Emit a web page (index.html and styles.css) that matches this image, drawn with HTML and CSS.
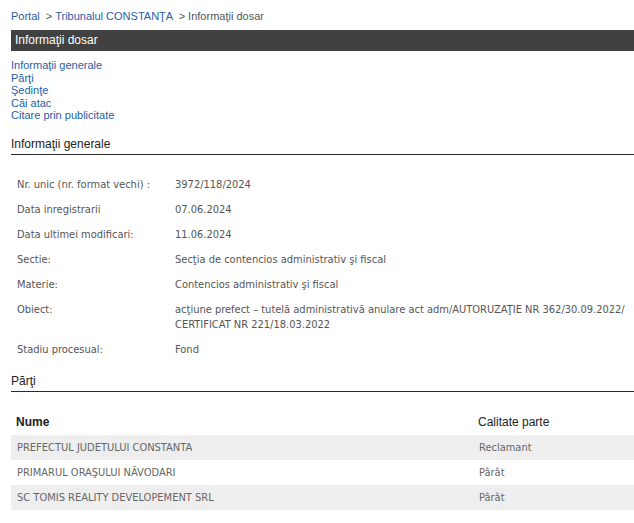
FILE: index.html
```html
<!DOCTYPE html>
<html lang="ro">
<head>
    <meta charset="UTF-8">
    <meta name="viewport" content="width=device-width, initial-scale=1.0">
    <title>Informaţii dosar</title>
    <link rel="stylesheet" href="styles.css">
</head>
<body>
    <div class="page">
        <div class="crumbs">
            <a href="#">Portal</a> &nbsp;&gt; <a href="#">Tribunalul CONSTANŢA</a> &nbsp;&gt; Informaţii dosar
        </div>

        <h1 class="title-bar">Informaţii dosar</h1>

        <ul class="toc">
            <li><a href="#generale">Informaţii generale</a></li>
            <li><a href="#parti">Părţi</a></li>
            <li><a href="#">Şedinţe</a></li>
            <li><a href="#">Căi atac</a></li>
            <li><a href="#">Citare prin publicitate</a></li>
        </ul>

        <h2 class="section" id="generale">Informaţii generale</h2>
        <table class="details">
            <tr><td class="label">Nr. unic (nr. format vechi) :</td><td>3972/118/2024</td></tr>
            <tr><td class="label">Data inregistrarii</td><td>07.06.2024</td></tr>
            <tr><td class="label">Data ultimei modificari:</td><td>11.06.2024</td></tr>
            <tr><td class="label">Sectie:</td><td>Secţia de contencios administrativ şi fiscal</td></tr>
            <tr><td class="label">Materie:</td><td>Contencios administrativ şi fiscal</td></tr>
            <tr><td class="label">Obiect:</td><td>acţiune prefect – tutelă administrativă anulare act adm/AUTORUZAŢIE NR 362/30.09.2022/<wbr>CERTIFICAT NR 221/18.03.2022</td></tr>
            <tr><td class="label">Stadiu procesual:</td><td>Fond</td></tr>
        </table>

        <h2 class="section section-next" id="parti">Părţi</h2>
        <table class="parties">
            <tr>
                <th class="name-col">Nume</th>
                <th class="role-col">Calitate parte</th>
            </tr>
            <tr><td>PREFECTUL JUDETULUI CONSTANTA</td><td>Reclamant</td></tr>
            <tr><td>PRIMARUL ORAŞULUI NĂVODARI</td><td>Pârât</td></tr>
            <tr><td>SC TOMIS REALITY DEVELOPEMENT SRL</td><td>Pârât</td></tr>
        </table>
    </div>
</body>
</html>
```

FILE: styles.css
```css
body {
    margin: 0;
    font-family: Arial, "Liberation Sans", sans-serif;
    background-color: #fff;
}
a {
    color: #1f5ea8;
    text-decoration: none;
}
.page {
    padding: 10px 0 0 11px;
}
.crumbs {
    font-size: 11px;
    line-height: 13px;
    color: #555;
}
.title-bar {
    margin: 7px 0 0;
    height: 21px;
    line-height: 21px;
    padding-left: 4px;
    background-color: #414141;
    color: #fff;
    font-size: 12px;
    font-weight: normal;
}
.toc {
    list-style: none;
    margin: 8px 0 0;
    padding: 0;
    font-size: 11px;
    line-height: 12.5px;
}
.section {
    margin: 15.5px 0 0;
    padding-bottom: 3px;
    font-size: 12px;
    line-height: 14px;
    font-weight: normal;
    color: #222;
    border-bottom: 1px solid #2b2b2b;
}
.section-next {
    margin-top: 12px;
}
.details,
.parties {
    width: 100%;
    border-collapse: collapse;
    font-family: "DejaVu Sans Condensed", Tahoma, "DejaVu Sans", sans-serif;
    font-size: 11px;
}
.details {
    margin-top: 17px;
}
.parties {
    margin-top: 18px;
}
.details td {
    padding: 5px 6px;
    line-height: 15px;
    vertical-align: top;
    color: #555;
}
.details .label {
    width: 146px;
}
.parties th {
    padding: 5px;
    line-height: 15px;
    text-align: left;
    font-family: Arial, "Liberation Sans", sans-serif;
    font-size: 12px;
    color: #222;
}
.parties .name-col {
    width: 452px;
    font-weight: bold;
}
.parties .role-col {
    font-weight: normal;
}
.parties td {
    padding: 5px 6px;
    line-height: 15px;
    color: #666;
}
.parties tr:nth-child(even) td {
    background-color: #eee;
}
```
